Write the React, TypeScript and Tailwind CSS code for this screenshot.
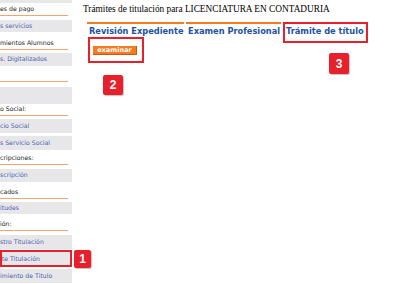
import React from 'react';

interface MenuItem {
  kind: 'link' | 'head';
  text: string;
  className: string;
}

const items: MenuItem[] = [
  { kind: 'link', text: '', className: 'h-[3px]' },
  { kind: 'head', text: 'es de pago', className: 'h-[13px]' },
  { kind: 'link', text: 's servicios', className: 'mt-[4px] h-[12px]' },
  { kind: 'head', text: 'mientos Alumnos', className: 'h-[18px]' },
  { kind: 'link', text: 's. Digitalizados', className: 'mt-[3px] h-[13px]' },
  { kind: 'head', text: '', className: 'h-[16px]' },
  { kind: 'link', text: '', className: 'mt-[5px] h-[17px]' },
  { kind: 'head', text: 'o Social:', className: 'h-[12px]' },
  { kind: 'link', text: 'cio Social', className: 'mt-[3px] h-[14px]' },
  { kind: 'link', text: 's Servicio Social', className: 'mt-[3px] h-[14px]' },
  { kind: 'head', text: 'cripciones:', className: 'h-[15px]' },
  { kind: 'link', text: 'scripción', className: 'mt-[4px] h-[13px]' },
  { kind: 'head', text: 'cados', className: 'h-[17px]' },
  { kind: 'link', text: 'itudes', className: 'mt-[3px] h-[12px]' },
  { kind: 'head', text: 'ión:', className: 'h-[17px]' },
  { kind: 'link', text: 'stro Titulación', className: 'mt-[4px] h-[14px]' },
  { kind: 'link', text: 'ite Titulación', className: 'mt-[3px] h-[14px]' },
  { kind: 'link', text: 'imiento de Titulo', className: 'mt-[3px] h-[14px]' },
];

const Badge = ({ n, className }: { n: string; className: string }) => (
  <div
    className={`absolute flex items-center justify-center rounded-[2px] bg-[#e8202b] text-white font-bold text-[12px] leading-none shadow-[1px_1px_1px_rgba(0,0,0,0.25)] ${className}`}
    style={{ fontFamily: '"Liberation Sans", Arial, sans-serif' }}
  >
    {n}
  </div>
);

export default function App() {
  return (
    <div className="relative flex w-[400px] h-[284px] overflow-hidden bg-white">
      {/* sidebar */}
      <div
        className="flex flex-col w-[72px] shrink-0 text-[6.2px]"
        style={{ fontFamily: '"DejaVu Sans", Verdana, sans-serif' }}
      >
        {items.map((it, i) =>
          it.kind === 'link' ? (
            <div
              key={i}
              className={`flex items-center bg-[#e7e7e9] text-[#4c5fb2] whitespace-nowrap overflow-hidden leading-none ${it.className}`}
            >
              {it.text}
            </div>
          ) : (
            <div
              key={i}
              className={`flex items-end w-[68px] pb-[3px] border-b border-[#f4a470] text-[#222] whitespace-nowrap overflow-hidden leading-none ${it.className}`}
            >
              {it.text}
            </div>
          )
        )}
      </div>

      {/* main */}
      <div className="flex flex-col pl-[11px]">
        <div
          className="pt-[3px] h-[22px] text-[9.3px] text-black whitespace-nowrap leading-[12px]"
          style={{ fontFamily: '"Liberation Serif", "Times New Roman", serif' }}
        >
          Trámites de titulación para LICENCIATURA EN CONTADURIA
        </div>
        <div
          className="flex items-start ml-[4px] gap-[2px] text-[8.25px] font-bold text-[#1d52a3] leading-none whitespace-nowrap"
          style={{ fontFamily: '"DejaVu Sans", Verdana, sans-serif' }}
        >
          <div className="w-[97px] border-t-2 border-[#f47b20] pl-[2px] pt-[3px] h-[15px]">Revisión Expediente</div>
          <div className="w-[95px] border-t-2 border-[#f47b20] pl-[2px] pt-[3px] h-[15px]">Examen Profesional</div>
          <div className="pl-[3px] pt-[5px] h-[15px]">Trámite de título</div>
        </div>
        <div className="ml-[10px] mt-[9px]">
          <button
            className="w-[44px] h-[9px] bg-[#f47b20] border-r border-b border-[#c4581a] text-white font-bold text-[6.6px] leading-none flex items-center justify-center"
            style={{ fontFamily: '"DejaVu Sans", Verdana, sans-serif' }}
          >
            examinar
          </button>
        </div>
      </div>

      {/* annotations */}
      <div className="absolute left-0 top-[250px] w-[72px] h-[17px] border-2 border-[#e8202b]" />
      <div className="absolute left-[88px] top-[37px] w-[56px] h-[26px] border-2 border-[#e8202b]" />
      <div className="absolute left-[283px] top-[22px] w-[85px] h-[21px] border-2 border-[#e8202b]" />
      <Badge n="1" className="left-[74px] top-[250px] w-[17px] h-[18px]" />
      <Badge n="2" className="left-[103px] top-[75px] w-[20px] h-[20px]" />
      <Badge n="3" className="left-[329px] top-[53px] w-[20px] h-[21px]" />
    </div>
  );
}
